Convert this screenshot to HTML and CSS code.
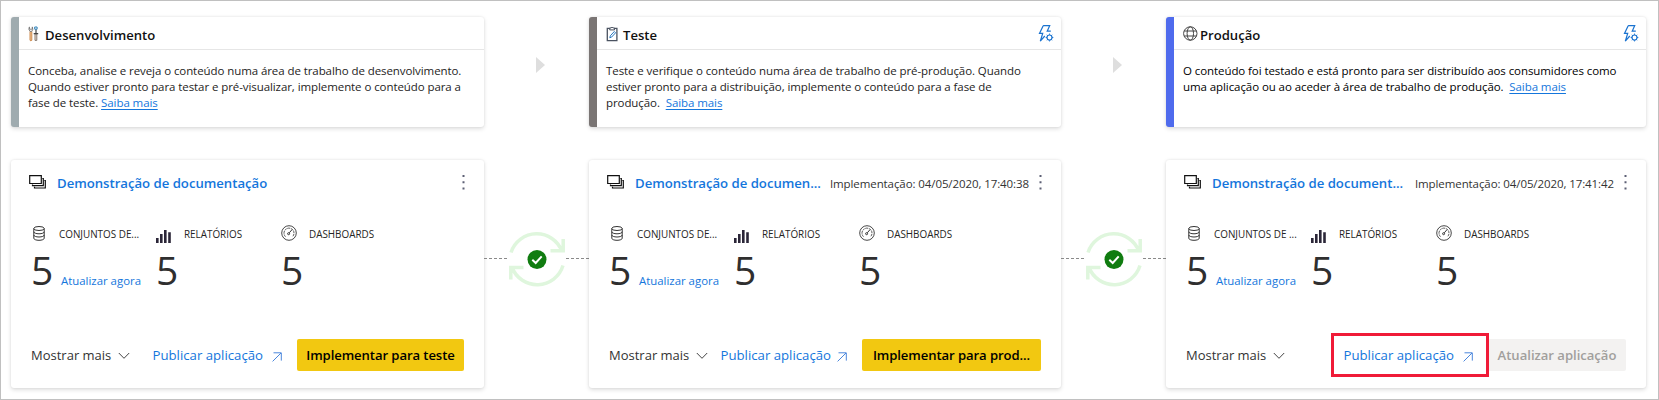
FILE: index.html
```
<!DOCTYPE html>
<html lang="pt">
<head>
<meta charset="utf-8">
<title>Pipeline de implementação</title>
<link rel="stylesheet" href="styles.css">
</head>
<body>
<svg class="defs" aria-hidden="true">
  <symbol id="i-flash" viewBox="0 0 16 17"><path d="M5.200.7h6.500L9.200 6.200h3.600M5.200.7 1.500 8.400h3.200L2.300 16.200 6.800 11" fill="none" stroke="#1a73d0" stroke-width="1.200"/><circle cx="11.500" cy="12.500" r="2.500" fill="none" stroke="#1a73d0" stroke-width="1.200"/><path d="M11.500 8.600v1.200M11.500 15.200v1.200M7.700 12.500h1.200M14.100 12.500h1.200M8.800 9.800l.8.8M13.400 14.400l.8.8M8.800 15.200l.8-.8M13.400 10.600l.8-.8" stroke="#1a73d0" stroke-width="1"/></symbol>
  <symbol id="i-stack" viewBox="0 0 17 14"><path d="M.7.7h11.600v7.800H.7zM13.300 3.500h1v7.200H3.500V9.500M15.300 5.500h1v7.500H5.500v-1.300" fill="none" stroke="#111" stroke-width="1.200"/></symbol>
  <symbol id="i-db" viewBox="0 0 12 15"><g fill="none" stroke="#333"><ellipse cx="6" cy="2.500" rx="5.200" ry="2"/><path d="M.8 2.500v9.800c0 1.100 2.300 2 5.200 2s5.200-.9 5.200-2V2.500M.8 5.800c0 1.100 2.300 2 5.200 2s5.200-.9 5.200-2M.8 9c0 1.100 2.300 2 5.200 2s5.200-.9 5.200-2"/></g></symbol>
  <symbol id="i-bars" viewBox="0 0 15 14"><path d="M0 9h2.600v5H0zM4 5h2.600v9H4zM8 1h2.600v13H8zM12.200 3.200h2.600V14h-2.600z" fill="#2b2638"/></symbol>
  <symbol id="i-gauge" viewBox="0 0 16 16"><g fill="none" stroke="#333"><circle cx="8" cy="8" r="7.300" stroke-width=".9"/><path d="M4.500 11.700a5 5 0 1 1 7 0" stroke-width=".8" stroke-dasharray="2.600 .7"/><path d="M8.300 7.800l2.800-3.300"/><circle cx="7.600" cy="8.700" r="1"/></g></symbol>
  <symbol id="i-chev" viewBox="0 0 12 8"><path d="M.8 1 6 6.300 11.200 1" fill="none" stroke="#444"/></symbol>
  <symbol id="i-out" viewBox="0 0 10 10"><path d="M.6 9.400 9 1M1.500.8h7.800v7.800" fill="none" stroke="#4a86dc"/></symbol>
  <symbol id="i-dots" viewBox="0 0 3 16"><path d="M.5 1h2v2h-2zM.5 7.200h2v2h-2zM.5 13.400h2v2h-2z" fill="#5d6075"/></symbol>
  <symbol id="i-sync" viewBox="0 0 58 56"><g fill="none" stroke="#dff6dd" stroke-width="3.500"><path d="M3 21.500A27 27 0 0 1 54 20.500M55.200 8v11.800H42.500M55 34.500A27 27 0 0 1 4 36.500M2.800 48.500V36.600H15.500"/></g><circle cx="29" cy="28.500" r="9.500" fill="#107c10"/><path d="m24.300 28.700 3.400 3.300 6-6.600" fill="none" stroke="#fff" stroke-width="2"/></symbol>
</svg>

<main class="pipeline">
  <section class="stage stage-dev">
    <header class="stage-head">
      <svg class="stage-icon" viewBox="0 0 16 16"><g fill="none"><path d="M2 5.500v8.800q.9 1 1.800 0V5.500" stroke="#cf8a4c" fill="#f2c79a"/><path d="M1.400.9Q.2 3.600 2 5.400h1.800Q5.500 3.600 4.300.9v2.300H1.400z" stroke="#777" stroke-width=".9"/><path d="M7 7.800v6.600h1.800V7.800z" stroke="#857a72" fill="#f0e2d4"/><path d="M5.700 7.700h4.500M8 7V3.200" stroke="#444" stroke-width="1.200"/><path d="M6.700 1h2.400v2.200H6.700z" stroke="#2f80b8"/></g></svg>
      <h2 class="stage-title">Desenvolvimento</h2>
    </header>
    <p class="stage-text">Conceba, analise e reveja o conteúdo numa área de trabalho de desenvolvimento.<br>Quando estiver pronto para testar e pré-visualizar, implemente o conteúdo para a<br>fase de teste. <a class="learn">Saiba mais</a></p>
  </section>
  <div class="next"><span class="triangle"></span></div>
  <section class="stage stage-test">
    <header class="stage-head">
      <svg class="stage-icon" viewBox="0 0 16 16"><g fill="none" stroke="#4a5260"><path d="M1.300 2.300h9.600v12.400H1.300z" stroke-width="1.300"/><path d="M3.700 3.900V2h1.400q1-2 2 0h1.400v1.900z" fill="#fff"/><path d="m3.800 11.800.5-2 4-4.300 1.300 1.300-4 4.300z" stroke="#2878c0"/></g></svg>
      <h2 class="stage-title">Teste</h2>
      <svg class="flash"><use href="#i-flash"/></svg>
    </header>
    <p class="stage-text">Teste e verifique o conteúdo numa área de trabalho de pré-produção. Quando<br>estiver pronto para a distribuição, implemente o conteúdo para a fase de<br>produção.&nbsp; <a class="learn">Saiba mais</a></p>
  </section>
  <div class="next"><span class="triangle"></span></div>
  <section class="stage stage-prod">
    <header class="stage-head">
      <svg class="stage-icon" viewBox="0 0 16 16"><g fill="none" stroke="#444"><circle cx="7.300" cy="7.500" r="6.700"/><ellipse cx="7.300" cy="7.500" rx="3.200" ry="6.700"/><path d="M1.200 5h12.200M1.200 10h12.200"/></g></svg>
      <h2 class="stage-title">Produção</h2>
      <svg class="flash"><use href="#i-flash"/></svg>
    </header>
    <p class="stage-text dark">O conteúdo foi testado e está pronto para ser distribuído aos consumidores como<br>uma aplicação ou ao aceder à área de trabalho de produção.&nbsp; <a class="learn">Saiba mais</a></p>
  </section>

  <section class="card">
    <header class="card-head">
      <svg class="stack"><use href="#i-stack"/></svg>
      <h3 class="card-title">Demonstração de documentação</h3>
      <svg class="dots"><use href="#i-dots"/></svg>
    </header>
    <div class="metrics">
      <div class="metric"><div class="label"><svg class="m-icon db"><use href="#i-db"/></svg>CONJUNTOS DE...</div><div class="value"><b class="num">5</b><a class="refresh">Atualizar agora</a></div></div>
      <div class="metric"><div class="label"><svg class="m-icon bars"><use href="#i-bars"/></svg>RELATÓRIOS</div><div class="value"><b class="num">5</b></div></div>
      <div class="metric"><div class="label"><svg class="m-icon gauge"><use href="#i-gauge"/></svg>DASHBOARDS</div><div class="value"><b class="num">5</b></div></div>
    </div>
    <footer class="card-foot">
      <span class="more">Mostrar mais<svg class="chev"><use href="#i-chev"/></svg></span>
      <a class="publish">Publicar aplicação<svg class="out"><use href="#i-out"/></svg></a>
      <button class="deploy to-test">Implementar para teste</button>
    </footer>
  </section>
  <div class="link"><i class="dash"></i><svg class="sync"><use href="#i-sync"/></svg><i class="dash"></i></div>
  <section class="card">
    <header class="card-head">
      <svg class="stack"><use href="#i-stack"/></svg>
      <h3 class="card-title">Demonstração de documen...</h3>
      <span class="date">Implementação: 04/05/2020, 17:40:38</span>
      <svg class="dots"><use href="#i-dots"/></svg>
    </header>
    <div class="metrics">
      <div class="metric"><div class="label"><svg class="m-icon db"><use href="#i-db"/></svg>CONJUNTOS DE...</div><div class="value"><b class="num">5</b><a class="refresh">Atualizar agora</a></div></div>
      <div class="metric"><div class="label"><svg class="m-icon bars"><use href="#i-bars"/></svg>RELATÓRIOS</div><div class="value"><b class="num">5</b></div></div>
      <div class="metric"><div class="label"><svg class="m-icon gauge"><use href="#i-gauge"/></svg>DASHBOARDS</div><div class="value"><b class="num">5</b></div></div>
    </div>
    <footer class="card-foot">
      <span class="more">Mostrar mais<svg class="chev"><use href="#i-chev"/></svg></span>
      <a class="publish tight">Publicar aplicação<svg class="out"><use href="#i-out"/></svg></a>
      <button class="deploy to-prod">Implementar para prod...</button>
    </footer>
  </section>
  <div class="link"><i class="dash"></i><svg class="sync"><use href="#i-sync"/></svg><i class="dash"></i></div>
  <section class="card">
    <header class="card-head">
      <svg class="stack"><use href="#i-stack"/></svg>
      <h3 class="card-title">Demonstração de document...</h3>
      <span class="date">Implementação: 04/05/2020, 17:41:42</span>
      <svg class="dots"><use href="#i-dots"/></svg>
    </header>
    <div class="metrics">
      <div class="metric"><div class="label"><svg class="m-icon db"><use href="#i-db"/></svg>CONJUNTOS DE ...</div><div class="value"><b class="num">5</b><a class="refresh">Atualizar agora</a></div></div>
      <div class="metric"><div class="label"><svg class="m-icon bars"><use href="#i-bars"/></svg>RELATÓRIOS</div><div class="value"><b class="num">5</b></div></div>
      <div class="metric"><div class="label"><svg class="m-icon gauge"><use href="#i-gauge"/></svg>DASHBOARDS</div><div class="value"><b class="num">5</b></div></div>
    </div>
    <footer class="card-foot">
      <span class="more">Mostrar mais<svg class="chev"><use href="#i-chev"/></svg></span>
      <a class="publish marked">Publicar aplicação<svg class="out"><use href="#i-out"/></svg></a>
      <button class="deploy disabled">Atualizar aplicação</button>
    </footer>
  </section>
</main>
</body>
</html>
```
FILE: styles.css
```
*, ::after { box-sizing: border-box; }
body {
  margin: 0;
  width: 1659px;
  height: 400px;
  background: #fff;
  border: 1px solid #c0c0c0;
  font-family: "Open Sans", "Noto Sans", sans-serif;
  color: #252423;
  overflow: hidden;
}
.defs { display: none; }
svg { display: block; flex: none; }
h2, h3, p { margin: 0; }

.pipeline {
  display: grid;
  grid-template-columns: 473px 105px 472px 105px 480px;
  grid-template-rows: 110px 228px;
  row-gap: 33px;
  padding: 16px 0 0 10px;
}
.stage, .card {
  background: #fff;
  border-radius: 3px;
  box-shadow: 0 1.600px 4px rgba(0, 0, 0, .13), 0 0 2px rgba(0, 0, 0, .08);
}

.stage { border-left: 8px solid; }
.stage-dev { border-left-color: #9fabaf; }
.stage-test { border-left-color: #7a7574; }
.stage-prod { border-left-color: #4f6bed; }
.stage-head {
  display: flex;
  height: 33px;
  padding: 0 7px 0 9px;
  border-bottom: 1px solid #e6e6e6;
}
.stage-icon { width: 16px; height: 16px; margin: 9px 1px 0 0; }
.stage-title {
  flex: 1;
  font-size: 13.100px;
  font-weight: 560;
  line-height: 36px;
  color: #111;
}
.flash { width: 16px; height: 17px; margin-top: 8px; }
.stage-text {
  padding: 13px 0 0 9px;
  font-size: 11.500px;
  line-height: 16px;
  letter-spacing: -.08px;
  white-space: nowrap;
}
.dark { color: #000; }
.learn { color: #1476dc; text-decoration: underline; text-underline-offset: 2px; text-decoration-thickness: 1px; }

.next { display: flex; align-items: flex-start; padding: 40px 0 0 52px; }
.triangle {
  border-left: 9px solid #dedede;
  border-top: 8px solid transparent;
  border-bottom: 8px solid transparent;
}

.card { display: flex; flex-direction: column; padding: 13px 20px 17px 18px; }
.card-head { display: flex; height: 20px; line-height: 20px; white-space: nowrap; }
.stack { width: 17px; height: 14px; margin: 2px 11px 0 0; }
.card-title {
  flex: 1;
  font-size: 13.200px;
  font-weight: 570;
  letter-spacing: -.03px;
  color: #1476dc;
}
.date { font-size: 11.500px; letter-spacing: -.09px; line-height: 21px; color: #333; margin-right: 10px; }
.dots { width: 3px; height: 16px; margin-top: 1px; margin-right: -1px; }

.metrics { display: flex; padding: 32px 0 0 2px; }
.metric { width: 125px; }
.label {
  display: flex;
  height: 18px;
  font-size: 9.900px;
  line-height: 19px;
  white-space: nowrap;
}
.m-icon { margin-right: 12px; }
.db { width: 12px; height: 15px; margin-left: 2px; margin-right: 14px; margin-top: 1px; }
.bars { width: 15px; height: 14px; margin-right: 13px; margin-top: 4px; }
.gauge { width: 16px; height: 16px; }
.value { display: flex; align-items: baseline; height: 52px; line-height: 53px; white-space: nowrap; }
.num { width: 30px; font-size: 39px; font-weight: 380; color: #2f2f2f; }
.refresh { font-size: 11.400px; color: #1476dc; }

.link { display: flex; align-items: center; justify-content: space-between; padding-bottom: 31px; }
.dash { width: 23px; height: 1px; background: repeating-linear-gradient(90deg, #8a8a8a 0 3px, transparent 3px 5px); }
.sync { width: 58px; height: 56px; }

.card-foot { display: flex; align-items: center; margin-top: auto; height: 32px; white-space: nowrap; }
.more { display: flex; align-items: center; margin-right: auto; font-size: 13px; line-height: 36px; color: #333; padding-left: 2px; }
.chev { width: 12px; height: 8px; margin-left: 7px; margin-top: 2px; }
.publish { position: relative; display: flex; align-items: center; margin-right: 15px; font-size: 13.200px; line-height: 32px; color: #1476dc; }
.out { width: 10px; height: 10px; margin-left: 9px; margin-top: 4px; }
.tight .out { margin-left: 6px; }
.marked { z-index: 1; }
.marked::after {
  content: "";
  position: absolute;
  left: -13px;
  top: -6px;
  width: 158px;
  height: 44px;
  border: 3px solid #f01b38;
}
.deploy {
  height: 32px;
  padding: 0;
  border: 0;
  border-radius: 2px;
  background: #f2c811;
  color: #000;
  font-family: inherit;
  font-size: 13.100px;
  font-weight: 580;
  line-height: 32px;
  letter-spacing: -.08px;
}
.to-test { width: 167px; }
.to-prod { width: 179px; }
.disabled { width: 138px; background: #f3f2f1; color: #a19f9d; letter-spacing: -.02px; }
```
